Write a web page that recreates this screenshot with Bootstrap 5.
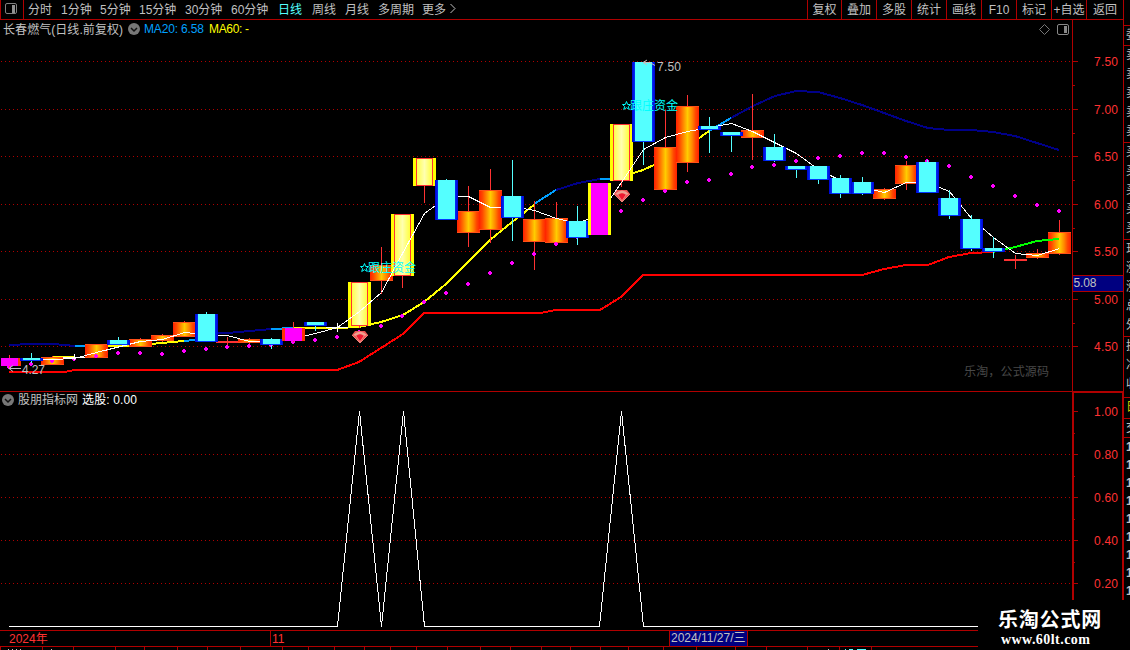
<!DOCTYPE html>
<html lang="zh-CN">
<head>
<meta charset="utf-8">
<title>长春燃气 日线</title>
<link href="https://cdn.jsdelivr.net/npm/bootstrap@5.3.0/dist/css/bootstrap.min.css" rel="stylesheet">
<style>
body{width:1130px;height:650px;background:#000;color:#c0c0c0;font:12px/18px "Liberation Sans","Noto Sans CJK SC",sans-serif}
svg{display:block;flex:none}
svg text{font-family:"Liberation Sans","Noto Sans CJK SC",sans-serif;font-size:12px}
.topbar{height:20px;border-bottom:1px solid #b00000;width:1123px;line-height:20px}
.periods{display:grid;grid-template-columns:24px 4px 33px 39px 39px 46px 46px 47px 34px 33px 33px 44px 28px 20px;height:19px;white-space:nowrap}
.tools{display:grid;grid-template-columns:34px 35px 35px 35px 35px 35px 35px 35px 37px;height:19px}
.tools span{border-left:1px solid #b00000;text-align:center;white-space:nowrap}
.leftcol{width:1123px}
.active-period{color:#54ffff}
.sidebar-cut{width:7px;border-left:1px solid #b00000}
.sidebar-cut>div{flex:none;overflow:hidden;border-bottom:1px solid #b00000;padding-left:2px}
.datebar{height:17px;border-top:1px solid #b00000;border-bottom:1px solid #b00000;color:#ff3232;line-height:17px}
.picked{background:#000080;border:1px solid #b00000;border-width:0 1px;color:#c0c0c0;width:79px;height:15px;white-space:nowrap;padding-left:1px;line-height:15px}
.sitemark{right:0;bottom:0;width:152px;height:50px;background:#000;color:#fff}
.sitename{font:bold 20px/20px "Noto Sans CJK SC",sans-serif;letter-spacing:.8px;padding:9px 0 0 20px;height:30px}
.siteurl{font:bold 14px/16px "Liberation Serif",serif;padding:2px 0 0 23px;letter-spacing:.45px}
</style>
</head>
<body class="overflow-hidden position-relative">
<div class="d-flex h-100">
<div class="leftcol d-flex flex-column">
  <header class="topbar d-flex justify-content-between">
    <div class="periods">
      <svg width="24" height="19"><path d="M.5 0V19M23.5 0V19" stroke="#b00000"/><rect x="5.5" y="3.5" width="11" height="10" rx="1.5" fill="none" stroke="#808080"/><rect x="12" y="5" width="3" height="8" fill="#909090"/></svg>
      <i></i><span>分时</span><span>1分钟</span><span>5分钟</span><span>15分钟</span><span>30分钟</span><span>60分钟</span><span class="active-period">日线</span><span>周线</span><span>月线</span><span>多周期</span><span>更多</span>
      <svg width="10" height="19"><path d="M.5 4L5 8.500L.5 13" stroke="#c0c0c0" fill="none"/></svg>
    </div>
    <div class="tools"><span>复权</span><span>叠加</span><span>多股</span><span>统计</span><span>画线</span><span>F10</span><span>标记</span><span>+自选</span><span>返回</span></div>
  </header>
  <div class="d-flex">
    <svg id="price" width="1072" height="371" viewBox="0 20 1072 371"></svg>
    <svg id="priceAxis" width="51" height="371" viewBox="1072 20 51 371"></svg>
  </div>
  <div class="d-flex">
    <svg id="signal" width="1072" height="239" viewBox="0 391 1072 239"></svg>
    <svg id="signalAxis" width="51" height="239" viewBox="1072 391 51 239" overflow="visible"></svg>
  </div>
  <div class="datebar d-flex">
    <span style="width:270px;padding-left:9px">2024年</span>
    <span style="width:399px;padding-left:1px;border-left:1px solid #b00000">11</span>
    <span class="picked">2024/11/27/三</span>
  </div>
  <svg id="foot" width="1123" height="3" viewBox="0 647 1123 3"></svg>
</div>
<aside class="sidebar-cut d-flex flex-column overflow-hidden">
  <div style="height:26px"></div>
  <div style="height:20px">委</div>
  <div style="height:97px;line-height:19px">卖<br>卖<br>卖<br>卖<br>卖</div>
  <div style="height:97px;line-height:19px">买<br>买<br>买<br>买<br>买</div>
  <div style="height:97px;line-height:19px">现<br>涨<br>涨<br>总<br>外</div>
  <div style="height:61px;line-height:19px">换<br>净<br>收</div>
  <div style="height:21px;color:#cccc00">日</div>
  <div style="height:19px">交</div>
  <div style="height:180px;line-height:18px;border:0;font-weight:bold">1<br>1<br>1<br>1<br>1<br>1<br>1<br>1<br>1</div>
</aside>
</div>
<div class="sitemark position-absolute"><div class="sitename">乐淘公式网</div><div class="siteurl">www.60lt.com</div></div>
<script>
// kind, body top, body bottom, wick top, wick bottom
const candles=[['m',358,366,355,369],['c',358,361,353,363],['o',357,365,356,365],['w',357,357,354,360],['o',344,358,344,358],['c',340,345,337,345],['o',339,347,338,347],['o',335,341,334,342],['o',322,337,321,337],['c',314,342,312,342],['r',341,343,337,345],['o',339,343,338,344],['c',339,345,338,349],['m',328,341,322,342],['c',322,326,322,331],['w',327,327,323,332],['y',282,326,282,328],['o',265,281,247,294],['y',214,276,214,288],['y',158,186,158,203],['c',180,220,179,220],['o',211,233,186,247],['o',190,230,169,243],['c',196,218,160,241],['o',219,242,201,270],['o',218,243,202,244],['c',221,238,206,245],['k',183,235,183,235],['y',124,181,124,187],['c',62,142,62,165],['o',147,190,110,190],['o',106,163,95,172],['c',126,130,117,153],['c',132,136,132,152],['o',130,138,94,160],['c',147,161,134,162],['c',166,170,166,178],['c',166,180,166,184],['c',178,194,175,198],['c',182,194,177,195],['o',189,199,188,200],['o',165,184,161,190],['c',162,193,160,193],['c',198,216,190,219],['c',219,249,215,251],['c',248,252,237,258],['r',259,261,255,269],['o',253,258,249,259],['o',232,254,220,255]];
const dots=[367,364,361,359,356,353,353,354,351,349,347,346,345,342,340,337,332,326,316,302,293,284,273,263,254,244,237,230,211,200,191,182,180,174,167,165,161,158,156,153,153,157,161,166,177,186,196,205,211];
const fast=[359,360,359,358,352,346.5,341,339,332,334,335,341,341,338,333,327,311,292,253,213,197,196,207,206,210,218,223,214,182,149,137,131,127,123,131,142,153,169,180,187,192,182,182,191,218,237,253,255,248];
const X=i=>Math.floor(9.2+21.875*i);
const R=(x,y,w,h,f)=>`<rect x="${x}" y="${y}" width="${w}" height="${h}" fill="${f}"/>`;
const L=(p,c,w=2)=>`<polyline points="${p}" fill="none" stroke="${c}" stroke-width="${w}"/>`;
function candle(c,i){
  const [k,t,b,wt,wb]=c,x=X(i),h=b-t;
  if(k=='w')return R(x,wt,1,wb-wt,'#fff')+R(x-11,t,22,1,'#fff');
  let s=R(x,wt,1,wb-wt,k=='c'?'#54ffff':'#ff3232');
  if(k=='r')return s+R(x-11,t,23,h,'#ff3232');
  if(k=='o')return s+R(x-11,t,23,h,'url(#gOrange)')+`<path d="M${x-11} ${t+.5}h23M${x-11} ${b-.5}h23" stroke="#ff5018"/>`;
  if(k=='c')return s+R(x-11,t,23,h,'url(#gBlue)')+R(x-8,t,17,h-1,'#54ffff');
  if(k=='y')return s+R(x-11,t,23,h,'#ffff00')+R(x-8,t,17,h,'url(#gYellow)')+`<rect x="${x-7.5}" y="${t+.5}" width="16" height="${h-1}" fill="none" stroke="#ff3232"/>`;
  if(k=='k')return s+R(x-11,t,23,h,'#ffff00')+R(x-8,t,17,h,'#ff00ff');
  return s+R(x-(i?11:8),t,i?23:20,h,'#ff3200')+R(x-8,t,17,h,'#ff00ff');
}
const grid=ys=>ys.map(y=>`<path d="M1 ${y+.5}H1071" stroke="#b00000" stroke-dasharray="1 3"/>`).join('');
const mark=(x,y)=>`<g transform="translate(${x} ${y})"><path d="M-8 4L-5 0H5L8 4L0 12Z" fill="#ef5252"/><path d="M-7 4Q0-3 7 4L4 5Q0 1-4 5Z" fill="#f0a090"/><path d="M-4 5Q0 2 4 5L0 10Z" fill="#ee1830"/><path d="M-8 4L0 12L8 4M-4 5L0 11L4 5" fill="none" stroke="#f08078"/></g>`;
const star=(x,y)=>`<path transform="translate(${x} ${y})" d="M0-4L1.200-1H4L1.800 1L2.800 4L0 2.200L-2.800 4L-1.800 1L-4-1H-1.200Z" fill="none" stroke="#00ffff"/>`;
const chev=(x,y)=>`<circle cx="${x}" cy="${y}" r="6" fill="#777"/><path d="M${x-3} ${y-1}l3 3l3-3" fill="none" stroke="#111" stroke-width="1.500"/>`;
const T=(x,y,s,f,w)=>`<text x="${x}" y="${y}" fill="${f}"${w?` textLength="${w}"`:''}>${s}</text>`;
const pts=candles.map((c,i)=>(X(i)+.5)+','+(fast[i]+.5)).join(' ');
const warm=c=>'oyr'.includes(c[0]);
let body1='',body2='';
candles.forEach((c,i)=>{if(warm(c))body1+=candle(c,i);else body2+=candle(c,i)});
const dot=(y,i)=>R(X(i)-2,y-1,4,2,'#ff00ff')+R(X(i)-1,y-2,2,4,'#ff00ff');
price.innerHTML=`<defs>
<linearGradient id="gOrange"><stop offset="0" stop-color="#ff2000"/><stop offset=".15" stop-color="#ff4800"/><stop offset=".3" stop-color="#ff8000"/><stop offset=".5" stop-color="#ffcc00"/><stop offset=".7" stop-color="#ff8800"/><stop offset=".85" stop-color="#ff4800"/><stop offset="1" stop-color="#ff2000"/></linearGradient>
<linearGradient id="gBlue"><stop offset="0" stop-color="#0000d0"/><stop offset=".15" stop-color="#0038ff"/><stop offset=".85" stop-color="#0038ff"/><stop offset="1" stop-color="#0000d0"/></linearGradient>
<linearGradient id="gYellow"><stop offset="0" stop-color="#ffff40"/><stop offset=".5" stop-color="#ffffb0"/><stop offset="1" stop-color="#ffff30"/></linearGradient></defs>
<g shape-rendering="crispEdges">${grid([61,109,156,204,251,299,346])}
${L('9,345 31,344 53,344 75,346','#000088')}${L('75,346 96,346','#00a0ff')}${L('206,334 228,333 250,331 271,329','#000088')}${L('271,329 293,328','#00a0ff')}
${L('53,357 75,356','#ffff00',1)}${L('96,347 140,345 162,343 184,341','#ffff00')}${L('184,341 206,339','#00a0ff')}
${L('293,328 337,328 359,327 381,322 403,315 424,302 446,284 468,262 490,240 512,222 534,205','#ffff00')}
${L('534,204 556,190','#00a0ff')}${L('556,190 578,183 600,179','#000088')}${L('600,179 621,179','#00a0ff')}
${L('621,177 643,170 665,160 687,147 709,131','#ffff00')}${L('709,131 731,118','#00a0ff')}
${L('731,118 753,106 775,96 796,91 818,92 840,98 862,105 884,113 906,121 928,128 949,130 971,130 993,132 1015,136 1037,143 1059,150','#000088')}
${L('9,372 64,372 75,370 337,370 359,362 381,348 403,334 424,313 540,313 556,310 600,310 621,297 643,275 862,275 884,269 906,265 928,265 949,257 971,253 993,252','#ff0000')}
${body1}${dots.map(dot).join('')}${L('993,252 1015,247 1037,241 1059,239','#00ff00')}${L(pts,'#fff',1)}${body2}
</g>
${mark(360,331)}${mark(622,190)}
${star(364.5,267.5)}${T(368,272,'跟庄资金','#00ffff',48)}${star(626.5,105.5)}${T(630,110,'跟庄资金','#00ffff',48)}
${T(22,374,'4.27','#c0c0c0',23)}<path d="M9 368.500H21M13 365.500L9 368.500L13 371.500M643 62.500H650L655 65.500M647 60L643 62.500L647 65" fill="none" stroke="#c0c0c0"/>
${T(657,71,'7.50','#c0c0c0',24)}
${T(3,34,'长春燃气(日线.前复权)','#c0c0c0',120)}${chev(134,29)}${T(144,33,'MA20: 6.58','#00a0ff',60)}${T(209,33,'MA60: -','#ffff00',40)}
<path d="M1044.500 24.500l5 5l-5 5l-5-5z" fill="none" stroke="#777"/><rect x="1057.500" y="24.500" width="11" height="10" rx="1.500" fill="none" stroke="#888"/><rect x="1064" y="26" width="3" height="7" fill="#888"/>
${T(964,376,'乐淘，公式源码','#484848',85)}`;
const tick=(y,w)=>R(1073,y,w,1,'#b00000');
priceAxis.innerHTML=R(1072,20,1,371,'#b00000')+[61,109,156,204,251,299,346].map((y,i)=>tick(y,5)+(i<6?tick(y+24,2):'')+T(1094,y+5,(7.5-i*.5).toFixed(2),'#ff3232',24)).join('')
+`<rect x="1072.500" y="275.500" width="51" height="16" fill="#000080" stroke="#b00000"/>`+T(1073.500,287,'5.08','#c0c0c0',23);
signal.innerHTML=`<g shape-rendering="crispEdges">${R(0,391,1072,1,'#b00000')}${grid([454,497,540,583])}${L('9,626.5 337.5,626.5 359.5,411 381.5,626.5 403.5,411 424.500,626.5 599.5,626.5 621.5,411 643.5,626.5 978,626.5','#fff',1)}</g>${chev(8,400)}${T(18,404,'股朋指标网','#c0c0c0',60)}${T(82,404,'选股: 0.00','#fff',55)}`;
signalAxis.innerHTML=R(1072,391,51,2,'#b00000')+R(1072,391,2,210,'#b00000')+R(1122,391,2,210,'#b00000')+[411,454,497,540,583].map((y,i)=>tick(y,5)+(i<4?tick(y+22,2):'')+T(1094,y+5,(1-i*.2).toFixed(2),'#ff3232',24)).join('');
foot.innerHTML=[0,42,73,115,144,177,207,240,282,308,334,364,390,416,447,480,510,541,570,600,628,663,696,735,766,807,839,871].map(x=>R(x,647,1,3,'#b00000')).join('')+[8,12,16,20,51,828].map(x=>R(x,649,1,1,'#c0c0c0')).join('')+R(845,649,1,1,'#54ffff')+R(849,649,4,1,'#54ffff')+R(857,649,9,1,'#54ffff');
</script>
<script src="https://cdn.jsdelivr.net/npm/bootstrap@5.3.0/dist/js/bootstrap.bundle.min.js"></script>
</body>
</html>
